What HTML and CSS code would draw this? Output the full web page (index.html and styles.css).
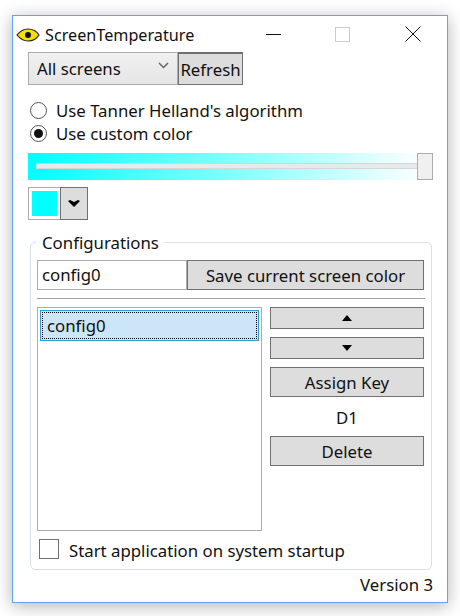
FILE: index.html
```html
<!DOCTYPE html>
<html lang="en">
<head>
<meta charset="utf-8">
<title>ScreenTemperature</title>
<link rel="stylesheet" href="styles.css">
</head>
<body>
<div class="window">
  <header class="titlebar">
    <svg class="app-icon" width="24" height="14" viewBox="0 0 24 14"><path d="M1 7C5 2 9 1 12 1s8 1 11 6c-3 5-8 6-11 6S5 12 1 7z" fill="#f5e000" stroke="#222" stroke-width="1.2"/><circle cx="12" cy="7" r="3" fill="#111"/></svg>
    <span class="title">ScreenTemperature</span>
    <div class="caption">
      <span class="cap cap-min"></span>
      <span class="cap cap-max"></span>
      <svg class="cap-close" width="16" height="16" viewBox="0 0 16 16"><path d="M.5.5l15 15M15.500.5l-15 15" stroke="#111" stroke-width="1" fill="none"/></svg>
    </div>
  </header>
  <main class="content">
    <div class="screens">
      <div class="combo"><span>All screens</span>
        <svg width="11" height="7" viewBox="0 0 11 7"><path d="M1 1l4.500 4.500L10 1" fill="none" stroke="#666" stroke-width="1.500"/></svg>
      </div>
      <button class="btn refresh">Refresh</button>
    </div>
    <label class="radio first"><span class="radio-dot"></span>Use Tanner Helland's algorithm</label>
    <label class="radio"><span class="radio-dot on"></span>Use custom color</label>
    <div class="slider"><span class="track"></span><span class="thumb"></span></div>
    <div class="picker">
      <span class="swatch-box"><span class="swatch"></span></span>
      <span class="drop"><svg width="12" height="7" viewBox="0 0 12 7"><path d="M0 1L2 0l4 2 4-2 2 1-6 6z" fill="#000"/></svg></span>
    </div>
    <fieldset class="group">
      <legend>Configurations</legend>
      <div class="save-row">
        <div class="input">config0</div>
        <button class="btn save">Save current screen color</button>
      </div>
      <hr class="sep">
      <div class="lists">
        <div class="list"><div class="item"><span class="item-in">config0</span></div></div>
        <div class="side">
          <button class="btn small"><svg width="10" height="6" viewBox="0 0 10 6"><path d="M5 0l5 6H0z" fill="#000"/></svg></button>
          <button class="btn small"><svg width="10" height="6" viewBox="0 0 10 6"><path d="M0 0h10L5 6z" fill="#000"/></svg></button>
          <button class="btn tall">Assign Key</button>
          <div class="key">D1</div>
          <button class="btn tall">Delete</button>
        </div>
      </div>
      <label class="check"><span class="box"></span><span class="check-text">Start application on system startup</span></label>
    </fieldset>
    <div class="version">Version 3</div>
  </main>
</div>
</body>
</html>
```

FILE: styles.css
```css
* { box-sizing: border-box; }
html, body { margin: 0; height: 100%; background: #fff; }
body {
  width: 460px; height: 616px; overflow: hidden;
  padding: 15px 12px 13px;
  font-family: "Noto Sans", "Open Sans", sans-serif;
  font-size: 16.8px; color: #111;
  background: #fff;
}
.window {
  width: 436px; height: 588px;
  background: #fff;
  border: 1px solid #5ba5f2;
  box-shadow: 0 3px 16px rgba(0,0,0,.3);
  display: flex; flex-direction: column;
}
.titlebar { height: 36px; display: flex; align-items: center; padding-left: 3px; flex: none; }
.app-icon { flex: none; margin-top: 1px; }
.title { margin-left: 5px; font-size: 16.2px; line-height: 36px; margin-top: 1px; }
.caption { margin-left: auto; display: flex; align-items: center; padding-right: 26px; }
.cap-min { width: 15px; height: 1px; background: #111; margin-right: 54px; }
.cap-max { width: 15px; height: 15px; border: 1px solid #ccc; margin-right: 55px; }
.cap-close { display: block; }
.content { flex: 1; padding: 0 15px; display: flex; flex-direction: column; }
.screens { display: flex; height: 33px; }
.combo {
  width: 150px; display: flex; align-items: center; justify-content: space-between;
  padding: 0 8px;
  border: 1px solid #acacac;
  background: linear-gradient(#f0f0f0, #e6e6e6);
}
.combo svg { margin-bottom: 6px; }
.btn {
  font: inherit; color: inherit; padding: 0;
  background: #ddd; border: 1px solid #707070;
  display: flex; align-items: center; justify-content: center;
}
.refresh { width: 65px; border-width: 2px 1px 1px 1px; }
.radio { display: flex; align-items: center; height: 23px; }
.radio.first { margin-top: 14px; }
.radio-dot {
  width: 17px; height: 17px; border-radius: 50%;
  border: 1px solid #555; background: #fff; margin: 0 9px 0 2px;
  display: flex; align-items: center; justify-content: center; flex: none;
}
.radio-dot.on::after { content: ""; width: 9px; height: 9px; border-radius: 50%; background: #111; }
.slider {
  margin-top: 8px; height: 27px; width: 405px;
  display: flex; align-items: center;
  padding-left: 8px;
  background: linear-gradient(to right, #0ff, #fff 98%);
}
.track { flex: 1; height: 6px; background: #e7eaea; border: 1px solid #d6d6d6; border-right: 0; margin-top: -1px; }
.thumb { width: 16px; height: 27px; background: #f0f0f0; border: 1px solid #acacac; flex: none; }
.picker { display: flex; height: 33px; margin-top: 7px; }
.swatch-box { width: 33px; border: 1px solid #acacac; padding: 3px; background: #fff; }
.swatch { display: block; width: 100%; height: 100%; background: #0ff; border: 0; }
.drop {
  width: 28px; margin-left: -1px; background: #ddd; border: 1px solid #707070;
  display: flex; align-items: center; justify-content: center;
}
.group {
  margin: 11px 0 0 2px; padding: 0 6px; width: 402px; height: 339px;
  border: 1px solid #d9dfe6; border-radius: 5px; min-width: 0;
}
.group legend { padding: 0 6px; line-height: 23px; margin-left: -1px; }
.save-row { display: flex; height: 30px; margin-top: 6px; }
.input { width: 150px; border: 1px solid #acacac; padding: 0 4px; line-height: 27px; }
.save { width: 237px; }
.sep { margin: 8px 0; border: 0; height: 1px; background: #a0a0a0; }
.lists { display: flex; }
.list { width: 225px; height: 224px; border: 1px solid #acacac; padding: 2px; }
.item { height: 31px; background: #cde6f7; border: 1px solid #26a0da; padding: 1px; }
.item-in { display: block; height: 100%; border: 1px dotted #000; padding-left: 4px; line-height: 25px; }
.side { margin-left: 8px; width: 154px; display: flex; flex-direction: column; }
.side .btn { width: 154px; }
.small { height: 22px; margin-bottom: 8px; }
.tall { height: 30px; }
.key { height: 39px; padding-top: 1px; display: flex; align-items: center; justify-content: center; }
.check { display: flex; align-items: center; height: 23px; margin-top: 6px; padding-left: 2px; }
.check-text { margin-top: 3px; }
.box { width: 20px; height: 20px; border: 1px solid #707070; margin-right: 10px; flex: none; }
.version { text-align: right; margin-right: -1px; line-height: 24px; margin-top: 3px; }
```
